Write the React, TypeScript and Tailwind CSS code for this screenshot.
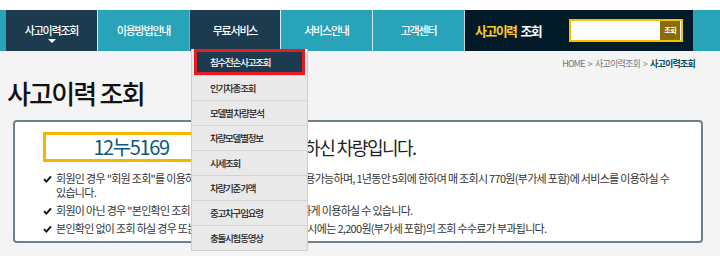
import React from "react";

const NAV = ["사고이력조회", "이용방법안내", "무료서비스", "서비스안내", "고객센터"];

const MENU = [
  "침수전손사고조회",
  "인기차종조회",
  "모델별 차량분석",
  "차량모델별정보",
  "시세조회",
  "차량기준가액",
  "중고차구입요령",
  "충돌시험동영상",
];

const NOTES = [
  "회원인 경우 \"회원 조회\"를 이용하시면 보다 훨씬 저렴하게 이용가능하며, 1년동안 5회에 한하여 매 조회시 770원(부가세 포함)에 서비스를 이용하실 수 있습니다.",
  "회원이 아닌 경우 \"본인확인 조회\"를 통해서 1회 무료로 편리하게 이용하실 수 있습니다.",
  "본인확인 없이 조회 하실 경우 또는 무료조회 횟수를 초과하실 시에는 2,200원(부가세 포함)의 조회 수수료가 부과됩니다.",
];

function Check() {
  return (
    <svg width="9" height="8" viewBox="0 0 9 8" className="mt-[4px] shrink-0">
      <path d="M1 4.2 L3.4 6.6 L8 1.4" fill="none" stroke="#111" strokeWidth="1.9" />
    </svg>
  );
}

export default function App() {
  return (
    <div className="relative h-[256px] w-[720px] overflow-hidden bg-[#f4f4f4] font-['Noto_Sans_CJK_KR','Noto_Sans',sans-serif]">
      <div className="h-[10px] bg-white" />

      {/* top nav */}
      <nav className="flex h-[41px] bg-[#29a3b8] pl-[6px] text-white">
        {NAV.map((label, i) => (
          <div
            key={label}
            className={
              "relative flex h-full items-center justify-center text-[11px] font-medium tracking-[-1.2px] " +
              (i === 0
                ? "w-[91px] bg-[#1d3b4f]"
                : i === 2
                  ? "w-[91px] border-l border-[#5fb8c8] bg-[#1d3b4f]"
                  : "w-[92px] border-l border-white/80")
            }
          >
            {label}
            {i === 0 && (
              <span className="absolute left-[42px] top-[29px] h-0 w-0 border-x-[4px] border-t-[4px] border-x-transparent border-t-white" />
            )}
          </div>
        ))}
        <div className="flex h-full w-[229px] items-center border-l border-white/80 bg-[#031a29] pl-[10px]">
          <span className="text-[13px] font-bold tracking-[-1.6px] text-[#ffcb22]">사고이력</span>
          <span className="ml-[4px] text-[13px] font-bold tracking-[-1.6px] text-white">조회</span>
          <div className="ml-[28px] flex h-[23px] w-[114px] items-center justify-end border-2 border-[#f4c300] bg-white pr-[1px]">
            <span className="flex h-[19px] w-[20px] items-center justify-center bg-[#8a6b06] text-[7px] font-bold tracking-[-0.5px] text-white">
              조회
            </span>
          </div>
        </div>
      </nav>

      {/* breadcrumb */}
      <div className="flex justify-end pr-[25px] pt-[7px] text-[9px] leading-[12px] tracking-[-0.8px] text-[#777]">
        <span>HOME</span>
        <span className="mx-[3px]">&gt;</span>
        <span>사고이력조회</span>
        <span className="mx-[3px]">&gt;</span>
        <span className="font-bold text-[#0f4c5e]">사고이력조회</span>
      </div>

      <h1 className="ml-[7px] mt-[8px] text-[26px] font-medium leading-[30px] tracking-[-1.8px] text-[#111]">
        사고이력 조회
      </h1>

      {/* card */}
      <div className="ml-[13px] mt-[12px] h-[123px] w-[690px] rounded-[4px] border-2 border-[#6f808b] bg-white pl-[28px] pt-[10px]">
        <div className="flex items-center">
          <div className="flex h-[30px] w-[176px] items-center justify-center border-[3px] border-[#f2b500] text-[20px] leading-none tracking-[-1.4px] text-[#0d5a7c]">
            12누5169
          </div>
          <span className="ml-[55px] text-[18px] tracking-[-1.5px] text-[#222]">조회하신 차량입니다.</span>
        </div>
        <ul className="mt-[9px] flex w-[642px] flex-col gap-[4px] text-[11px] leading-[14px] tracking-[-0.7px] text-[#333]">
          {NOTES.map((t) => (
            <li key={t} className="flex gap-[4px]">
              <Check />
              <span className="break-keep">{t}</span>
            </li>
          ))}
        </ul>
      </div>

      {/* dropdown menu */}
      <div className="absolute left-[191px] top-[49px] w-[117px] border-x border-b border-[#cdcdcd] bg-[#e9e9e9]">
        {MENU.map((m, i) =>
          i === 0 ? (
            <div
              key={m}
              className="mx-[2px] flex h-[26px] items-center border-[3px] border-[#e51a22] bg-[#1d3b4f] pl-[13px] text-[9.5px] font-medium tracking-[-1.2px] text-white"
            >
              {m}
            </div>
          ) : (
            <div
              key={m}
              className="flex h-[25px] items-center border-t border-[#d3d3d3] pl-[18px] text-[9.5px] font-medium tracking-[-1.2px] text-[#222]"
            >
              {m}
            </div>
          ),
        )}
      </div>
    </div>
  );
}
